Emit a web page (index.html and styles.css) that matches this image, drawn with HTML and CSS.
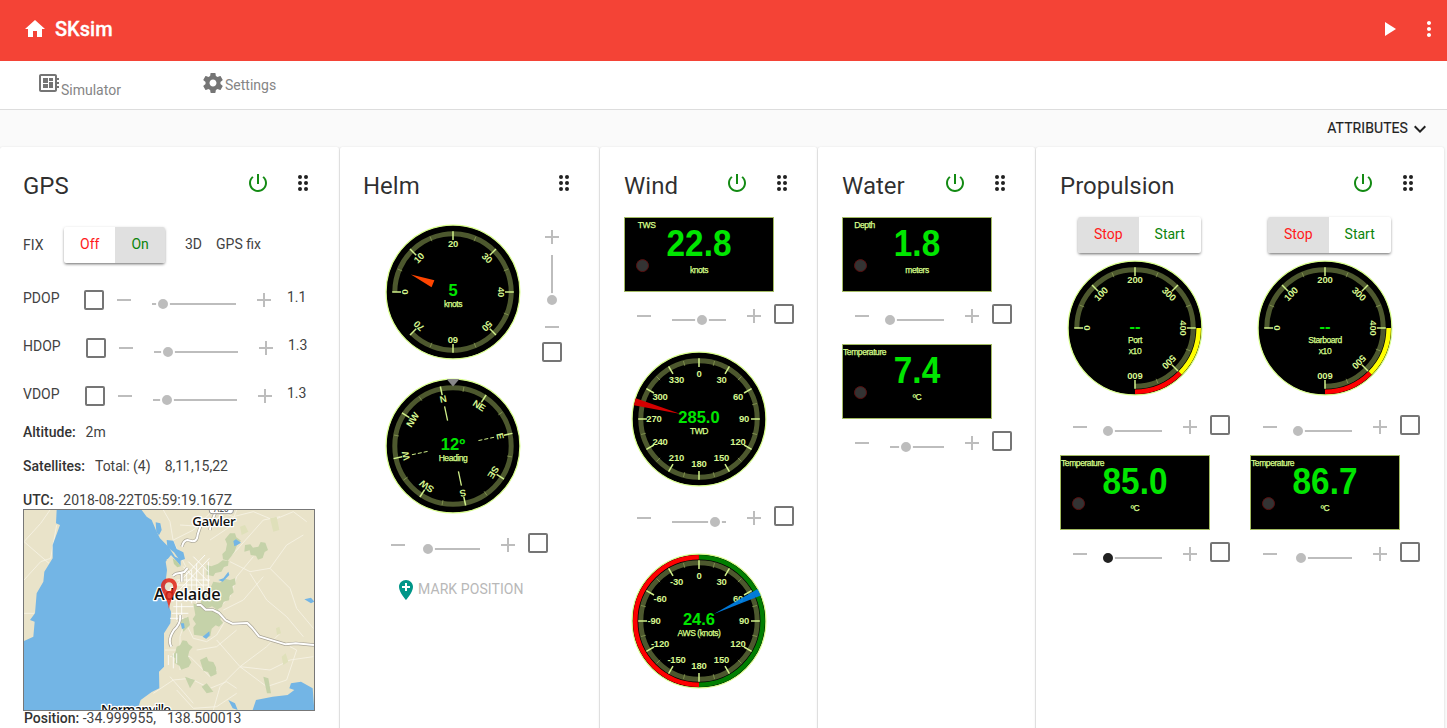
FILE: index.html
```html
<!DOCTYPE html>
<html lang="en">
<head>
<meta charset="utf-8">
<title>SKsim</title>
<link rel="stylesheet" href="styles.css">
</head>
<body>
<header class="topbar">
  <svg class="icon home" viewBox="0 0 24 24"><path d="M10 20v-6h4v6h5v-8h3L12 3 2 12h3v8z"/></svg>
  <h1>SKsim</h1>
  <svg class="icon play" viewBox="0 0 24 24"><path d="M8 5v14l11-7z"/></svg>
  <svg class="icon more" viewBox="0 0 24 24"><path d="M12 8c1.1 0 2-.9 2-2s-.9-2-2-2-2 .9-2 2 .9 2 2 2zm0 2c-1.1 0-2 .9-2 2s.9 2 2 2 2-.9 2-2-.9-2-2-2zm0 6c-1.1 0-2 .9-2 2s.9 2 2 2 2-.9 2-2-.9-2-2-2z"/></svg>
</header>
<nav class="tabs">
  <a class="tab tab-sim"><svg class="icon" viewBox="0 0 24 24"><path d="M22 9V7h-2V5c0-1.100-.9-2-2-2H4c-1.100 0-2 .9-2 2v14c0 1.100.9 2 2 2h14c1.100 0 2-.9 2-2v-2h2v-2h-2v-2h2v-2h-2V9h2zm-4 10H4V5h14v14zM6 13h5v4H6zm6-6h4v3h-4zM6 7h5v5H6zm6 4h4v6h-4z"/></svg><span>Simulator</span></a>
  <a class="tab tab-set"><svg class="icon" viewBox="0 0 24 24"><path d="M19.430 12.980c.04-.32.07-.64.07-.98s-.03-.66-.07-.98l2.110-1.650c.19-.15.24-.42.12-.64l-2-3.460c-.12-.22-.39-.3-.61-.22l-2.490 1c-.52-.4-1.080-.73-1.690-.98l-.38-2.650C14.460 2.180 14.250 2 14 2h-4c-.25 0-.46.18-.49.42l-.38 2.650c-.61.25-1.170.59-1.690.98l-2.490-1c-.23-.09-.49 0-.61.22l-2 3.460c-.13.22-.07.49.12.64l2.110 1.650c-.04.32-.07.65-.07.98s.03.66.07.98l-2.110 1.650c-.19.15-.24.42-.12.64l2 3.460c.12.22.39.3.61.22l2.490-1c.52.4 1.080.73 1.690.98l.38 2.650c.03.24.24.42.49.42h4c.25 0 .46-.18.49-.42l.38-2.650c.61-.25 1.170-.59 1.690-.98l2.490 1c.23.09.49 0 .61-.22l2-3.460c.12-.22.07-.49-.12-.64l-2.110-1.650zM12 15.500c-1.930 0-3.500-1.570-3.500-3.500s1.570-3.500 3.500-3.500 3.500 1.570 3.500 3.500-1.570 3.500-3.500 3.500z"/></svg><span>Settings</span></a>
</nav>
<div class="attrbar"><span>ATTRIBUTES</span><svg class="icon chevron" viewBox="0 0 24 24"><path d="M7.410 8.590 12 13.170l4.590-4.580L18 10l-6 6-6-6z"/></svg></div>

<main class="cards">
  <section class="card card-gps">
    <div class="card-head" data-power="1"><h2>GPS</h2></div>
    <div class="fix-row">
      <span class="fix-label">FIX</span>
      <div class="toggle"><span class="opt red">Off</span><span class="opt green on">On</span></div>
      <span class="fix-dim">3D</span><span>GPS fix</span>
    </div>
    <div class="dop"><span class="dop-name">PDOP</span><span class="dop-ctl" data-pos="10.5"></span><span class="dop-val">1.1</span></div>
    <div class="dop dop-h"><span class="dop-name">HDOP</span><span class="dop-ctl" data-pos="14"></span><span class="dop-val">1.3</span></div>
    <div class="dop dop-v"><span class="dop-name">VDOP</span><span class="dop-ctl" data-pos="14"></span><span class="dop-val">1.3</span></div>
    <div class="info"><b>Altitude:</b><span>2m</span></div>
    <div class="info"><b>Satellites:</b><span>Total: (4)</span><span class="sats">8,11,15,22</span></div>
    <div class="info info-utc"><b>UTC:</b><span>2018-08-22T05:59:19.167Z</span></div>
    <div class="map">
      <svg viewBox="42 60 870 600" preserveAspectRatio="none">
        <rect x="30" y="50" width="900" height="630" fill="#e9e3c9"/>
        <g class="minor-roads">
          <path d="M42 155 92 100 120 60M42 155l75 65M42 270l50-55 30-10 18-100M42 370l30 0M460 60l20 35 10 60 20 40 30 60M490 150l60-30 50-50M510 105l80 5 40-30M620 60l50 20 60-15 60 25 60-25 40 30M680 60l-20 50-60 40M500 395l30 10 20 40 40 10 30-20 30-50M620 450l70 80 80 60 60-20 30-90-20-10M690 530l-60 60-20 70M690 530l80-60 40-40M690 530l90 10 60-30 70-10M560 480l60-10 60-50M480 500l60 0 60 60 20-20M430 610l60-40 50-5 60 30 50-20 30 20M500 600l50 55 70-5 60-40M620 240l60-60 80-90 50-10M660 215l60 30 60-10 50-70 50-30M780 235l60 60 20 60 50 60M730 200l-50 60-20 60-40 40M720 250l50 80 60 50 50 60M640 360l60-30 60-70M510 530l0-90 20-60M465 480l45 0 0 60M550 640l-70-80"/>
        </g>
        <g fill="#c5d2a9">
          <path d="m585 300 18-10 7-15 20 3 15-12 15 4 15-5 2 18-10 6 4 18-12 10-2 14-16 4-6 16-14 8-15-10-10 4-20-9-6-14-14-6z"/>
          <path d="m550 340 12 4 18-9 10 14 15 11 18-2 12 12-4 18 8 10-12 12-10-4-12 10-4 22-14 8-10-8-25-4-2-22 8-10-10-15 8-12z"/>
          <path d="m660 130 15 0 4 12 14 10-12 14-8 20-10 14-10 12-14-4-2-16 10-10 4-20-6-14z"/>
          <path d="m705 165 16-2 8 10 16-3 7-14 14 2 8 22-10 6-6 18-14 5-6-12-16-2-3-14-16 4z"/>
          <path d="m590 225 14 4 20-8 14-10 18 2-2 14-12 4-8 14-18 4-6 10-20-5z"/>
          <path d="m500 470 10-4 8-15 12 2 6 10 12 8-10 12-4 16 10 18-8 14-22 8-6-12-14-8 2-14-10-6 10-12zM570 510l20-10 6 14 14 2 8 16 2 20-18 8-8-14-14-4zM525 560l30 10-15 25zM575 590l15-10 20 25-20 5zM760 560l15 5 8 45-12 0zM510 390l25-10 5 25-20 20z"/>
        </g>
        <g fill="#dfe0ba"><path d="m690 110 15-5 10 20-20 10zM780 85l20-5 8 40-18 5zM815 500l12-10 8 25-15 10zM798 415l10-5 5 20-12 5z"/></g>
        <g fill="#73b5e5">
          <path d="M140 60 395 60 410 80 425 90 440 125 450 145 475 170 495 200 512 208 512 228 492 205 483 195 467 215 471 240 465 290 475 345 483 365 481 400 462 430 462 530 447 545 448 595 425 606 392 630 382 660 42 660 42 453 70 440 74 395 60 390 75 370 80 310 100 275 103 245 128 205 128 165 150 105 138 100z"/>
          <path d="m437 97 14 3 4 20-8 16-8-10zM470 150l20 2 10 25 20 10 5 20-15 5-18-25-20-15zM728 660l10-30 50-10 45-5 20-15-15-5 5-15 30-5 35 20 5 65zM512 400l10 0 2 14-8 3zM578 440l10-8 10-8 1 12-10 10zM655 630l20 10 8 20-15-5zM670 153l8-5 15 10-10 6-10 5zM883 328l20-5 10 12-10 5zM625 270l15-5 15-20 3 10-20 20z"/>
        </g>
        <path d="m470 208 10-3 5 55 12-5-2-40 15 12 18 10-10 20-28 5-15-5z" fill="#e9e3c9"/>
        <path d="m488 205 12 8 12 16-10 3-10-10z" fill="#bfd0a2"/>
        <g class="streets"><path d="M495 290l90-95M508 300l90-95M520 230l60 60M535 215l60 60M550 200l45 45M500 270l100 0M495 285l100 0M530 245l0 90M545 240l0 100M560 220l0 120M580 235l0 85M490 350l60 0M485 370l50 0M490 310l110 0M500 300l0 90M515 340l0 50M595 215l0 90M480 385l40 0M475 495l0 30M490 490l0 45M500 490l0 30"/></g>
        <g class="road-edge"><path d="M516 170q4-18 16-20l16 4q14 0 15-20l10-30M510 375q4 25-18 45-20 30-8 50M560 345l12 0 15 14 20 0 20 10 20 22 20 10 45-2 15 15 20 25 40 12 40 12 30-3 55 5M488 258l10-7 25-5 10-12M515 250l0 25M600 120l3-20 12-30"/></g>
        <g class="road"><path d="M516 170q4-18 16-20l16 4q14 0 15-20l10-30M510 375q4 25-18 45-20 30-8 50M560 345l12 0 15 14 20 0 20 10 20 22 20 10 45-2 15 15 20 25 40 12 40 12 30-3 55 5M488 258l10-7 25-5 10-12M515 250l0 25M600 120l3-20 12-30"/></g>
        <rect x="598" y="40" width="72" height="31" rx="8" fill="#fff" stroke="#999" stroke-width="3"/>
        <text class="shield" x="634" y="66">A20</text>
        <text class="place" x="612" y="108" font-size="40" textLength="130">Gawler</text>
        <text class="place" x="532" y="331" font-size="49" textLength="200">Adelaide</text>
        <text class="place" x="378" y="672" font-size="40" textLength="210">Normanville</text>
        <path d="M477 265c-14 0-24 10-24 24 0 17 20 34 24 68 4-34 24-51 24-68 0-14-10-24-24-24zm0 12a13 13 0 1 1 0 26 13 13 0 0 1 0-26z" fill="#e02418" fill-opacity=".85" fill-rule="evenodd"/>
      </svg>
    </div>
    <div class="position"><b>Position:</b> -34.999955,<span>138.500013</span></div>
  </section>

  <section class="card card-helm">
    <div class="card-head"><h2>Helm</h2></div>
    <div class="helm-body">
      <div class="speed">
        <div class="gauge" data-gauge="speed"></div>
        <div class="vcontrol"><i class="plus"></i><div class="vtrack"><b></b></div><i class="minus"></i><i class="box"></i></div>
      </div>
      <div class="gauge compass" data-gauge="compass"></div>
      <div class="control" data-pos="2"></div>
      <div class="mark"><svg viewBox="0 0 24 24"><path d="M12 2C8.140 2 5 5.140 5 9c0 5.250 7 13 7 13s7-7.750 7-13c0-3.860-3.140-7-7-7zm4 8h-3v3h-2v-3H8V8h3V5h2v3h3v2z"/></svg><span>MARK POSITION</span></div>
    </div>
  </section>

  <section class="card">
    <div class="card-head" data-power="1"><h2>Wind</h2></div>
    <div class="stack">
      <div class="display" data-title="TWS" data-value="22.8" data-unit="knots"></div>
      <div class="control" data-pos="29.5"></div>
      <div class="gauge" data-gauge="twd"></div>
      <div class="control" data-pos="42.7"></div>
      <div class="gauge" data-gauge="aws"></div>
    </div>
  </section>

  <section class="card">
    <div class="card-head" data-power="1"><h2>Water</h2></div>
    <div class="stack">
      <div class="display" data-title="Depth" data-value="1.8" data-unit="meters"></div>
      <div class="control" data-pos="0.3"></div>
      <div class="display" data-title="Temperature" data-value="7.4" data-unit="ºC"></div>
      <div class="control" data-pos="16"></div>
    </div>
  </section>

  <section class="card">
    <div class="card-head" data-power="1"><h2>Propulsion</h2></div>
    <div class="engines">
      <div class="stack">
        <div class="toggle engine"><span class="opt red on">Stop</span><span class="opt green">Start</span></div>
        <div class="gauge" data-gauge="port"></div>
        <div class="control" data-pos="0"></div>
        <div class="display" data-title="Temperature" data-value="85.0" data-unit="ºC"></div>
        <div class="control dark" data-pos="0"></div>
      </div>
      <div class="stack">
        <div class="toggle engine"><span class="opt red on">Stop</span><span class="opt green">Start</span></div>
        <div class="gauge" data-gauge="starboard"></div>
        <div class="control" data-pos="0.3"></div>
        <div class="display" data-title="Temperature" data-value="86.7" data-unit="ºC"></div>
        <div class="control" data-pos="3"></div>
      </div>
    </div>
  </section>
</main>
<script src="app.js"></script>
</body>
</html>
```
FILE: styles.css
```css
* { box-sizing: border-box; }
body { margin: 0; height: 728px; overflow: hidden; background: #fafafa; font: 14px/20px Roboto, sans-serif; color: rgba(0,0,0,.8); }
h1, h2 { margin: 0; }
.icon { width: 24px; height: 24px; fill: currentColor; display: block; flex: none; }

.topbar { height: 61px; display: flex; align-items: center; padding: 0 6px 4px 23px; background: #f44336; color: #fff; }
.topbar h1 { font-size: 20px; font-weight: 500; line-height: 24px; -webkit-text-stroke: .3px #fff; margin: 0 auto 0 8px; }
.play { margin-right: 16px; }
.topbar .more { margin: 1px 0 0; }
.tabs { height: 49px; display: flex; background: #fff; border-bottom: 1px solid #ddd; color: #757575; padding-left: 37px; }
.tab { display: flex; align-items: flex-start; }
.tab-sim { width: 164px; padding-top: 10px; }
.tab-sim span { margin-top: 9px; }
.tab-set { padding-top: 10px; }
.tab-set span { margin-top: 4px; }
.tab span { color: #858585; }
.attrbar { height: 37px; display: flex; align-items: center; justify-content: flex-end; padding: 0 15px 1px 0; color: #212121; }
.chevron { margin-top: 1px; }
.attrbar span { -webkit-text-stroke: .15px #212121; letter-spacing: .08px; }

.cards { display: grid; grid-template-columns: 339px 259px 217px 217px 408px; gap: 1px; height: 600px; }
.card { background: #fff; border-radius: 2px; padding: 0 24px; min-width: 0; box-shadow: 0 1px 3px rgba(0,0,0,.14), 0 0 1px rgba(0,0,0,.1); }
.card-gps { padding: 0 23px; }
.card-helm { padding: 0 23px; }
.card-head { display: flex; height: 70px; align-items: flex-start; margin-right: -1px; }
.card-gps .card-head { margin-right: 1px; }
.card-helm .card-head { margin-right: 0; }
.card:last-child .card-head { margin-right: 0; }
.card-head h2 { font-size: 24px; line-height: 32px; font-weight: 400; margin: 23px auto 0 0; color: rgba(0,0,0,.82); }
.card-head svg { margin-top: 24px; color: #212121; }
.card-head .power { color: #138a13; margin-right: 21px; }

.stack { width: 170px; }
.engines { display: grid; grid-template-columns: 170px 170px; gap: 20px; }
.toggle { display: inline-flex; height: 36px; border-radius: 2px; overflow: hidden; background: #fff; line-height: 36px; box-shadow: 0 2px 3px -1px rgba(0,0,0,.4), 0 1px 3px rgba(0,0,0,.25); }
.opt { padding: 0 16px; }
.opt.on { background: #e0e0e0; }
.red { color: #ff1a1a; }
.green { color: #0a840a; }
.engine { display: flex; width: 123px; margin-left: 18px; }
.engine .opt { line-height: 34px; }
.gauge { width: 150px; height: 150px; }
.gauge svg, .display svg { display: block; }
.display { width: 150px; height: 75px; }

.control { display: flex; align-items: center; width: 170px; height: 40px; margin: 4px 0 8px; }
.minus, .plus { position: relative; flex: none; width: 40px; height: 40px; display: block; background: linear-gradient(#bdbdbd, #bdbdbd) center / 14px 2px no-repeat; }
.plus { background: linear-gradient(#bdbdbd, #bdbdbd) center / 14px 2px no-repeat, linear-gradient(#bdbdbd, #bdbdbd) center / 2px 14px no-repeat; }
.track { position: relative; flex: 1; height: 2px; background: #bdbdbd; margin: 8px 8px 0; }
.track b, .vtrack b { position: absolute; top: -6px; width: 14px; height: 14px; margin-left: -7px; border: 2px solid #fff; border-radius: 50%; background: #bdbdbd; }
.dark .track b { background: #212121; }
.box { flex: none; display: block; width: 20px; height: 20px; border: 2px solid #757575; border-radius: 2px; }
.control .box { margin-top: -4px; }

.fix-row { display: flex; align-items: flex-start; height: 59px; padding-top: 10px; line-height: 34px; color: #424242; }
.fix-label { width: 41px; padding-top: 1px; }
.fix-row .toggle { width: 101px; line-height: 34px; }
.fix-dim { margin: 0 14px 0 20px; }
.dop { display: flex; height: 48px; align-items: center; color: #424242; }
.dop-name { width: 61px; margin-top: -5px; }
.dop-h .dop-name { width: 63px; }
.dop-v .dop-name { width: 62px; }
.dop-ctl { display: flex; align-items: center; width: 200px; }
.dop-val { margin: -7px 0 0 3px; }
.dop-h .dop-val { margin-left: 2px; }
.dop-v .dop-val { margin-left: 2px; }
.dop-ctl .track { margin-right: 8px; }
.info { height: 34px; line-height: 34px; color: #424242; display: flex; gap: 10px; margin-top: 0; }
.info b, .position b { font-weight: 500; color: #333; }
.sats { margin-left: 4px; }
.dop-v + .info { margin-top: -5px; }
.info-utc { height: 26px; }
.map { width: 292px; height: 202px; border: 1px solid #777; overflow: hidden; }
.map svg { display: block; width: 290px; height: 200px; }
.minor-roads, .streets { fill: none; stroke: #f7f3e6; stroke-width: 2.5; stroke-linejoin: round; }
.streets { stroke-width: 2.5; stroke: #fff; }
.road-edge { fill: none; stroke: #aaa596; stroke-width: 10; stroke-linejoin: round; }
.road { fill: none; stroke: #fff; stroke-width: 6; stroke-linejoin: round; }
.place { font-family: "Open Sans", sans-serif; font-weight: 600; text-anchor: middle; fill: #111; stroke: #fff; stroke-width: 8; paint-order: stroke; stroke-linejoin: round; }
.shield { font: 600 24px "Open Sans", sans-serif; text-anchor: middle; fill: #555; }
.position { line-height: 14px; color: #424242; padding-left: 1px; }
.position span { margin-left: 11px; }

.helm-body { padding-left: 15px; }
.speed { display: flex; }
.vcontrol { width: 48px; display: flex; flex-direction: column; align-items: center; }
.vcontrol .plus { margin-bottom: -2px; }
.vtrack { position: relative; width: 2px; height: 46px; background: #bdbdbd; }
.vtrack b { left: 1px; top: 38px; }
.vcontrol .minus { margin-top: 6px; }
.vcontrol .box { margin-top: -5px; }
.compass { margin-top: 4px; }
.mark { display: flex; align-items: center; color: #b8b8b8; margin: 6px 0 0 16px; padding-top: 5px; height: 27px; }
.mark svg { width: 24px; height: 24px; fill: #009688; margin: 2px 0 0; }
.mark span { letter-spacing: .08px; }

.g-scale { font: 700 9.5px "Liberation Sans", Arial, sans-serif; fill: #d5f58f; text-anchor: middle; letter-spacing: -.2px; }
.g-value { font: 700 16.5px "Liberation Sans", Arial, sans-serif; fill: #00e600; text-anchor: middle; }
.g-unit { font: 8.5px "Liberation Sans", Arial, sans-serif; fill: #d9ff8c; stroke: #d9ff8c; stroke-width: .25; text-anchor: middle; letter-spacing: -.42px; }
.d-value { font: 700 34px "Liberation Sans", Arial, sans-serif; fill: #00e600; text-anchor: middle; }
```
FILE: app.js
```js
const INK = '#d0f08a';
const polar = (r, deg) => {
  const a = deg * Math.PI / 180;
  return [(75 + r * Math.sin(a)).toFixed(2), (75 - r * Math.cos(a)).toFixed(2)];
};
const arc = (r, from, to, color, width) => {
  if (to - from >= 360) return `<circle cx="75" cy="75" r="${r}" fill="none" stroke="${color}" stroke-width="${width}"/>`;
  const large = to - from > 180 ? 1 : 0;
  return `<path d="M${polar(r, from)} A${r} ${r} 0 ${large} 1 ${polar(r, to)}" fill="none" stroke="${color}" stroke-width="${width}"/>`;
};
const line = (deg, r1, r2, width, color, dash) =>
  `<path d="M${polar(r1, deg)} L${polar(r2, deg)}" stroke="${color}" stroke-width="${width}"${dash ? ` stroke-dasharray="${dash}"` : ''}/>`;
const needle = (deg, tip, base, half, color) => {
  const d = Math.atan(half / base) * 180 / Math.PI;
  return `<path d="M${polar(tip, deg)} L${polar(base, deg - d)} L${polar(base, deg + d)}z" fill="${color}"/>`;
};

const gauges = {
  speed: { start: -90, step: 45, labels: [0, 10, 20, 30, 40, 50, 60, 70], value: '5', units: ['knots'], turn: true, needle: [-67.5, 45.5, 22, 3.8, '#ff4500'] },
  compass: { start: -12, step: 45, labels: ['N', 'NE', 'E', 'SE', 'S', 'SW', 'W', 'NW'], full: true, value: '12º', units: ['Heading'], turn: true, compass: true },
  twd: { start: 0, step: 30, labels: [0, 30, 60, 90, 120, 150, 180, 210, 240, 270, 300, 330], full: true, value: '285.0', units: ['TWD'], needle: [285, 19, 66.6, 3.7, '#d40000'] },
  aws: { start: 0, step: 30, labels: [0, 30, 60, 90, 120, 150, 180, -150, -120, -90, -60, -30], full: true, value: '24.6', units: ['AWS (knots)'], bands: [[0, 180, '#007f00'], [180, 359.9, '#ff0000']], needle: [64.5, 16.5, 66.8, 3.7, 'rgba(0,125,225,.95)'] },
  port: { start: -90, step: 45, labels: [0, 100, 200, 300, 400, 500, 600], value: '--', units: ['Port', 'x10'], turn: true, bands: [[90, 135, '#ffff00'], [135, 180, '#ff0000']] }
};
gauges.starboard = { ...gauges.port, units: ['Starboard', 'x10'] };

function drawGauge(g) {
  const n = g.labels.length;
  let s = '<circle cx="75" cy="75" r="66.9" fill="#000" stroke="#d9ff8c" stroke-width="1.2"/>';
  s += arc(58.2, g.start, g.full ? g.start + 360 : g.start + g.step * (n - 1), '#4d582e', 5);
  (g.bands || []).forEach(b => { s += arc(63.7, b[0], b[1], b[2], 4.6); });
  g.labels.forEach((text, i) => {
    const a = g.start + g.step * i;
    s += line(a, 60.8, 52, 1.5, INK);
    if (g.full || i < n - 1) s += line(a + g.step / 2, 60, 55, .8, '#8a9c55');
    const [x, y] = polar(g.turn ? 48 : 45, a);
    const rot = g.turn ? ` transform="rotate(${a} ${x} ${y})"` : '';
    s += `<text class="g-scale" x="${x}" y="${(+y + 3.2).toFixed(2)}"${rot}>${text}</text>`;
  });
  if (g.compass) {
    [0, 180].forEach(a => { s += line(a - 12, 40.5, 26, 1.3, INK); });
    [90, 270].forEach(a => { s += line(a - 12, 42, 26, 1, INK, '4 2'); });
    s += '<path d="M68.500 8h13l-6.500 7.500z" fill="#888"/>';
  }
  if (g.needle) s += needle(...g.needle);
  s += `<text class="g-value" x="75" y="78.800">${g.value}</text>`;
  g.units.forEach((u, i) => { s += `<text class="g-unit" x="75" y="${89.6 + i * 11}">${u}</text>`; });
  return `<svg width="150" height="150" viewBox="0 0 150 150">${s}</svg>`;
}

document.querySelectorAll('[data-gauge]').forEach(el => { el.innerHTML = drawGauge(gauges[el.dataset.gauge]); });
document.querySelectorAll('.display').forEach(el => {
  const { title, value, unit } = el.dataset;
  el.innerHTML = `<svg width="150" height="75" viewBox="0 0 150 75"><rect x=".5" y=".5" width="149" height="74" fill="#000" stroke="#a3bb62"/>
    <text class="g-unit" x="22.600" y="10.600">${title}</text><circle cx="18.500" cy="48.600" r="6" fill="#333" stroke="#5a0f0f"/>
    <text class="d-value" transform="translate(75 38.500) scale(.98 1.060)">${value}</text><text class="g-unit" x="75" y="55.600">${unit}</text></svg>`;
});
const track = pos => `<div class="track"><b style="left:${pos}px"></b></div>`;
document.querySelectorAll('.control').forEach(el => {
  el.innerHTML = `<i class="minus"></i>${track(el.dataset.pos)}<i class="plus"></i><i class="box"></i>`;
});
document.querySelectorAll('.dop-ctl').forEach(el => {
  el.innerHTML = `<i class="box"></i><i class="minus"></i>${track(el.dataset.pos)}<i class="plus"></i>`;
});
document.querySelectorAll('.card-head').forEach(el => {
  const power = el.dataset.power ? '<svg class="icon power" viewBox="0 0 24 24"><path d="M13 3h-2v10h2V3zm4.830 2.170-1.420 1.420C17.990 7.860 19 9.810 19 12c0 3.870-3.130 7-7 7s-7-3.130-7-7c0-2.190 1.010-4.140 2.580-5.420L6.170 5.170C4.230 6.820 3 9.260 3 12c0 4.970 4.030 9 9 9s9-4.030 9-9c0-2.740-1.230-5.180-3.170-6.830z"/></svg>' : '';
  const dots = [6, 12, 18].map(y => `<circle cx="9" cy="${y}" r="2"/><circle cx="15" cy="${y}" r="2"/>`).join('');
  el.insertAdjacentHTML('beforeend', `${power}<svg class="icon" viewBox="0 0 24 24">${dots}</svg>`);
});
```
